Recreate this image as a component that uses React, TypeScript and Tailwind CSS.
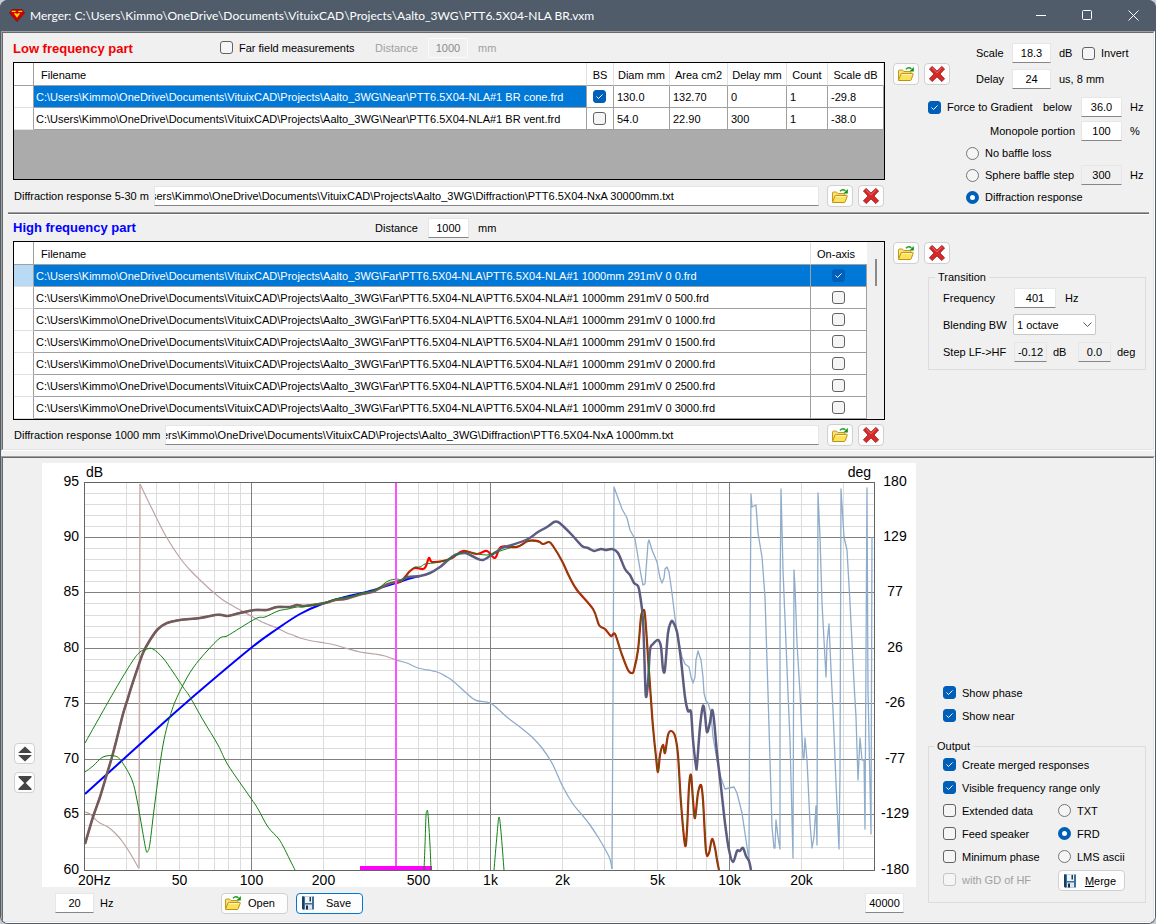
import type { ReactNode } from "react";
import clsx from "clsx";

type Point = [number, number];

const BASE = "C:\\Users\\Kimmo\\OneDrive\\Documents\\VituixCAD\\Projects\\Aalto_3WG\\";

const lowFiles = [
  { name: BASE + "Near\\PTT6.5X04-NLA#1 BR cone.frd", bs: true, diam: "130.0", area: "132.70", delay: "0", count: "1", scale: "-29.8" },
  { name: BASE + "Near\\PTT6.5X04-NLA#1 BR vent.frd", bs: false, diam: "54.0", area: "22.90", delay: "300", count: "1", scale: "-38.0" },
];

const highFiles = ["0", "500", "1000", "1500", "2000", "2500", "3000"].map(
  (angle) => BASE + "Far\\PTT6.5X04-NLA\\PTT6.5X04-NLA#1 1000mm 291mV 0 " + angle + ".frd"
);

/* ---------- Icons ---------- */

function AppLogo() {
  return (
    <svg width="16" height="13" viewBox="0 0 16 13" aria-hidden="true">
      <path d="M3 0.5h10L15.5 4 8 12.5 0.5 4z" fill="#d40000" stroke="#7c0000" strokeWidth="0.6" />
      <path d="M3 1.800h3.200L7 3H2.500zM9.800 1.800H13l.5 1.200H9z" fill="#ffe000" />
      <path d="M4.800 4.200h2.400L8 5.600l.8-1.400h2.400L8 8.800z" fill="#ffe000" />
    </svg>
  );
}

function FolderIcon() {
  return (
    <svg width="18" height="16" viewBox="0 0 18 16" aria-hidden="true">
      <path d="M1.5 13.5V5q0-1 1-1h3l1.3 1.5h6q1 0 1 1v2" fill="#f7e27a" stroke="#c59a1a" />
      <path d="M1.5 14.2 4 8q.3-.6 1-.6h10.6q.9 0 .6.8l-2 5.6q-.3.7-1 .7H2q-.7 0-.5-.3z" fill="#fbe25c" stroke="#c08f10" />
      <path d="M4.8 8.6h10" stroke="#fff7c0" />
      <path d="M9 3.200q2.600-2.800 5.400-.4" fill="none" stroke="#1da01d" strokeWidth="1.500" />
      <path d="M16.800 1v4.400h-4.400z" fill="#109010" />
    </svg>
  );
}

function DeleteIcon() {
  return (
    <svg width="18" height="18" viewBox="0 0 18 18" aria-hidden="true">
      <path
        d="M4.2 1.4 9 6.1l4.8-4.7 2.8 2.6L12 9l4.6 4.8-2.8 2.8L9 11.9l-4.8 4.7-2.8-2.8L6 9 1.4 4z"
        fill="#d42a2a"
        stroke="#a81616"
        strokeWidth="0.8"
      />
      <path d="M4.2 3 9 7.7 13.8 3" fill="none" stroke="#e87070" strokeWidth="1" />
    </svg>
  );
}

function DiskIcon() {
  return (
    <svg width="14" height="14" viewBox="0 0 14 14" aria-hidden="true">
      <path d="M1 .5h12v13H2L1 12.500z" fill="#3f7096" />
      <path d="M1 .5h2v13H2L1 12.500z" fill="#173f63" />
      <path d="M4 .5h7v6.500H4z" fill="#eef4f9" />
      <path d="M8.500 1h1.500v4.500H8.500z" fill="#22384e" />
      <path d="M4 8.500h7v5H4z" fill="#dbe6ef" />
      <path d="M5 9.500h2v4H5z" fill="#1d3047" />
    </svg>
  );
}

function ExpandIcon() {
  return (
    <svg width="14" height="16" viewBox="0 0 14 16" aria-hidden="true">
      <path d="M7 0.500 13.500 6.500v.5H.5v-.5zM7 15.500 13.500 9.500V9H.5v.5z" fill="#444" />
    </svg>
  );
}

function CollapseIcon() {
  return (
    <svg width="14" height="16" viewBox="0 0 14 16" aria-hidden="true">
      <path d="M.5 1h13v1.300L7.800 8l5.700 5.700V15H.5v-1.300L6.200 8 .5 2.300z" fill="#444" />
    </svg>
  );
}

/* ---------- Controls ---------- */

function CheckBox({ checked, label, disabled }: { checked?: boolean; label?: string; disabled?: boolean }) {
  return (
    <span className="grid size-[13px] shrink-0 place-items-center">
      <input
        type="checkbox"
        defaultChecked={checked}
        disabled={disabled}
        aria-label={label}
        className={clsx(
          "peer col-start-1 row-start-1 size-[13px] appearance-none rounded-[3px] border bg-[#f5f5f5] checked:border-[#005fb8] checked:bg-[#005fb8]",
          disabled ? "border-[#c4c4c4]" : "border-[#626262]"
        )}
      />
      <svg
        width="9"
        height="9"
        viewBox="0 0 9 9"
        className="pointer-events-none invisible col-start-1 row-start-1 peer-checked:visible"
        aria-hidden="true"
      >
        <path d="M1.500 4.500 3.500 6.500 7.500 2.500" fill="none" stroke="#fff" />
      </svg>
    </span>
  );
}

function Check({ children, checked, disabled, className }: { children: ReactNode; checked?: boolean; disabled?: boolean; className?: string }) {
  return (
    <label className={clsx("flex items-center gap-[6px] whitespace-nowrap", disabled && "text-[#a0a0a0]", className)}>
      <CheckBox checked={checked} disabled={disabled} />
      {children}
    </label>
  );
}

function Radio({ children, name, checked, className }: { children: ReactNode; name: string; checked?: boolean; className?: string }) {
  return (
    <label className={clsx("flex items-center gap-[6px] whitespace-nowrap", className)}>
      <input
        type="radio"
        name={name}
        defaultChecked={checked}
        className="size-[13px] shrink-0 appearance-none rounded-full border border-[#757575] bg-[#f5f5f5] checked:border-4 checked:border-[#005fb8] checked:bg-white"
      />
      {children}
    </label>
  );
}

function NumberBox({ id, value, label, readOnly, disabled, className }: { id?: string; value: string; label?: string; readOnly?: boolean; disabled?: boolean; className: string }) {
  return (
    <input
      id={id}
      type="text"
      defaultValue={value}
      aria-label={label}
      readOnly={readOnly}
      disabled={disabled}
      className={clsx(
        "h-[20px] shrink-0 border text-center",
        disabled ? "border-[#fafafa] bg-[#f0f0f0] text-[#8a8a8a]" : "border-[#e6e6e6] border-b-[#868686]",
        readOnly ? "bg-[#f0f0f0]" : !disabled && "bg-white",
        className
      )}
    />
  );
}

function IconButton({ label, children }: { label: string; children: ReactNode }) {
  return (
    <button type="button" aria-label={label} className="flex h-[22px] w-[26px] items-center justify-center rounded-[4px] border border-[#d0d0d0] bg-[#fdfdfd]">
      {children}
    </button>
  );
}

function FileButtons() {
  return (
    <div className="flex shrink-0 gap-[5px]">
      <IconButton label="Open file">
        <FolderIcon />
      </IconButton>
      <IconButton label="Remove file">
        <DeleteIcon />
      </IconButton>
    </div>
  );
}

function DiffractionRow({ id, label, value, wide }: { id: string; label: string; value: string; wide?: boolean }) {
  return (
    <div className="flex items-center pr-px">
      <label htmlFor={id} className={clsx("shrink-0 pl-px whitespace-nowrap", wide ? "w-[152px]" : "w-[141px]")}>
        {label}
      </label>
      <input
        id={id}
        type="text"
        defaultValue={value}
        className="mr-[8px] h-[20px] min-w-0 flex-1 border border-[#e6e6e6] border-b-[#868686] bg-white -indent-[4px]"
      />
      <FileButtons />
    </div>
  );
}

/* ---------- Tables ---------- */

function LowTable() {
  return (
    <div className="h-[118px] border border-black bg-[#ababab]">
      <table className="w-full table-fixed border-separate border-spacing-0 bg-white">
        <colgroup>
          <col className="w-[20px]" />
          <col />
          <col className="w-[27px]" />
          <col className="w-[56px]" />
          <col className="w-[58px]" />
          <col className="w-[59px]" />
          <col className="w-[41px]" />
          <col className="w-[56px]" />
        </colgroup>
        <thead>
          <tr className="h-[23px]">
            <th className="border-r border-b border-[#a0a0a0] p-0" />
            {["Filename", "BS", "Diam mm", "Area cm2", "Delay mm", "Count", "Scale dB"].map((title) => (
              <th
                key={title}
                className={clsx(
                  "overflow-hidden border-r border-b border-r-[#e0e0e0] border-b-[#a0a0a0] p-0 pt-[2px] font-normal whitespace-nowrap",
                  title === "Filename" ? "pl-[7px] text-left" : "text-center"
                )}
              >
                {title}
              </th>
            ))}
          </tr>
        </thead>
        <tbody>
          {lowFiles.map((file, i) => (
            <tr key={file.name} className="h-[22px]">
              <td className="border-r border-b border-r-[#a0a0a0] border-b-[#e0e0e0] p-0" />
              <td className={clsx("overflow-hidden border-r border-b border-[#a0a0a0] p-0 pl-[2px] whitespace-nowrap", i === 0 && "bg-[#0078d7] text-white")}>
                {file.name}
              </td>
              <td className="border-r border-b border-[#a0a0a0] p-0 pr-px">
                <div className="flex justify-center">
                  <CheckBox checked={file.bs} label="Baffle step" />
                </div>
              </td>
              {[file.diam, file.area, file.delay, file.count, file.scale].map((value, col) => (
                <td key={col} className="border-r border-b border-[#a0a0a0] p-0 pl-[3px]">
                  {value}
                </td>
              ))}
            </tr>
          ))}
        </tbody>
      </table>
    </div>
  );
}

function HighTable() {
  return (
    <div className="flex h-[179px] border border-black bg-[#f0f0f0]">
      <div className="min-w-0 flex-1 overflow-hidden">
        <table className="w-full table-fixed border-separate border-spacing-0 bg-white">
          <colgroup>
            <col className="w-[20px]" />
            <col />
            <col className="w-[56px]" />
          </colgroup>
          <thead>
            <tr className="h-[23px]">
              <th className="border-r border-b border-[#a0a0a0] p-0" />
              <th className="border-r border-b border-r-[#e0e0e0] border-b-[#a0a0a0] p-0 pt-[2px] pl-[7px] text-left font-normal">Filename</th>
              <th className="border-b border-[#a0a0a0] p-0 pt-[2px] pr-[6px] text-center font-normal">On-axis</th>
            </tr>
          </thead>
          <tbody>
            {highFiles.map((file, i) => (
              <tr key={file} className={clsx("h-[22px]", i === 0 && "bg-[#0078d7] text-white")}>
                <td className={clsx("border-r border-b border-r-[#a0a0a0] border-b-[#e0e0e0] p-0", i === 0 && "bg-[#b9daf4]")} />
                <td className="overflow-hidden border-r border-b border-[#a0a0a0] p-0 pl-[2px] whitespace-nowrap">{file}</td>
                <td className="border-r border-b border-[#a0a0a0] p-0">
                  <div className="flex justify-center">
                    <CheckBox checked={i === 0} label="On-axis" />
                  </div>
                </td>
              </tr>
            ))}
          </tbody>
        </table>
      </div>
      <div className="flex w-[17px] justify-center pt-[17px]">
        <div className="h-[27px] w-[2px] bg-[#8a8a8a]" />
      </div>
    </div>
  );
}

/* ---------- Chart ---------- */

const LEFT = 84;
const RIGHT = 874;
const TOP = 482;
const BOTTOM = 870;

const xOf = (hz: number) => Math.round(LEFT + 239 * Math.log10(hz / 20)) + 0.5;
const yOf = (db: number) => Math.floor(TOP + ((95 - db) * (BOTTOM - TOP)) / 35) + 0.5;

function line(points: Point[]) {
  return "M" + points.map((p) => p.join(",")).join("L");
}

// Catmull-Rom spline through all points
function smooth(points: Point[]) {
  let d = "M" + points[0].join(",");
  for (let i = 0; i < points.length - 1; i++) {
    const p0 = points[i - 1] ?? points[i];
    const p1 = points[i];
    const p2 = points[i + 1];
    const p3 = points[i + 2] ?? p2;
    d += `C${p1[0] + (p2[0] - p0[0]) / 6},${p1[1] + (p2[1] - p0[1]) / 6} ${p2[0] - (p3[0] - p1[0]) / 6},${p2[1] - (p3[1] - p1[1]) / 6} ${p2[0]},${p2[1]}`;
  }
  return d;
}

const phaseLowWrap: Point[] = [
  [85, 812], [90, 814], [95, 819], [100, 823], [108, 827], [115, 833], [122, 841], [130, 853], [138, 867], [139, 868],
];

const phaseLow: Point[] = [
  [140, 484], [157, 519], [167, 538], [180, 558], [190, 570], [200, 580], [213, 592], [223, 600], [233, 606], [251, 616],
  [262, 622], [277, 628], [287, 633], [293, 635], [300, 638], [312, 641], [325, 643], [335, 645], [345, 648], [360, 652],
  [375, 654], [385, 656], [396, 660],
];

const phaseHigh: Point[] = [
  [396, 660], [407, 663], [418, 668], [437, 672], [447, 677], [453, 681], [463, 690], [472, 698], [478, 701], [490, 703],
  [498, 709], [508, 718], [520, 727], [532, 737], [542, 748], [552, 763], [563, 787], [573, 804], [583, 816], [590, 825],
  [598, 837], [605, 849], [610, 859], [612, 869],
];

const phaseWraps: Point[] = [
  [612, 869], [613, 700], [614, 487], [622, 509], [627, 518], [630, 530], [635, 539], [638, 557], [641, 575], [643, 585],
  [645, 584], [647, 557], [648, 543], [649, 540], [652, 550], [657, 562], [660, 578], [662, 583], [664, 578], [665, 569],
  [667, 567], [669, 572], [672, 593], [675, 618], [678, 640], [682, 657], [685, 664], [689, 667], [691, 677], [693, 683],
  [695, 677], [696, 660], [698, 651], [701, 660], [703, 677], [704, 693], [706, 701], [708, 703], [711, 713], [713, 737],
  [717, 760], [721, 778], [725, 789], [729, 788], [734, 787], [737, 793], [742, 813], [747, 847], [749, 860], [750, 633],
  [751, 494], [752, 507], [756, 505], [758, 533], [762, 557], [765, 597], [768, 693], [772, 827], [774, 848], [775, 848],
  [776, 820], [778, 837], [780, 849], [780, 600], [781, 489], [783, 570], [788, 693], [790, 740], [793, 858], [794, 570],
  [795, 587], [797, 643], [800, 693], [803, 758], [804, 758], [805, 738], [807, 760], [810, 823], [812, 848], [814, 837],
  [816, 806], [817, 845], [818, 493], [820, 537], [822, 603], [826, 677], [827, 643], [829, 624], [831, 670], [833, 710],
  [836, 783], [839, 849], [840, 773], [841, 489], [844, 537], [847, 550], [850, 603], [854, 683], [856, 717], [858, 780],
  [860, 738], [862, 760], [864, 760], [865, 829], [867, 488], [868, 690], [871, 834], [872, 537],
];

const mergedLow: Point[] = [
  [85, 844], [93, 817], [100, 797], [106, 777], [112, 757], [117, 738], [123, 714], [128, 698], [131, 688], [137, 670],
  [143, 653], [150, 640], [158, 629], [167, 623], [180, 620], [200, 618], [215, 615], [222, 615], [228, 616], [240, 613],
  [255, 610], [267, 610], [277, 607], [290, 607], [297, 605], [303, 606], [312, 605], [325, 603], [335, 600], [345, 599],
  [352, 597], [362, 594], [372, 592], [380, 588], [388, 584], [396, 582],
];

const mergedHigh: Point[] = [
  [396, 582], [402, 580], [408, 577], [420, 576], [430, 573], [440, 567], [447, 561], [455, 555], [465, 553], [472, 556],
  [478, 559], [483, 560], [490, 556], [502, 548], [512, 545], [528, 539], [538, 532], [547, 527], [554, 522], [558, 522],
  [563, 526], [572, 535], [582, 546], [588, 548], [594, 551], [601, 549], [606, 550], [612, 549], [618, 553], [625, 569],
  [630, 575], [634, 583], [638, 586], [640, 595], [643, 620], [645, 677], [646, 697], [648, 683], [650, 650], [653, 644],
  [658, 640], [661, 647], [663, 669], [665, 669], [668, 633], [671, 622], [673, 622], [677, 632], [681, 660], [685, 697],
  [688, 711], [691, 712], [693, 740], [696, 766], [697, 765], [700, 727], [703, 706], [705, 715], [707, 732], [710, 722],
  [712, 710], [714, 720], [717, 753], [721, 787], [725, 823], [729, 850], [733, 862], [737, 851], [740, 851], [743, 848],
  [746, 856], [749, 861], [751, 870],
];

const highTarget: Point[] = [
  [85, 794], [138, 746], [170, 717], [202, 689], [251, 648], [277, 629], [300, 614], [322, 604], [345, 597], [370, 591],
  [396, 583], [408, 579], [420, 576],
];

const nearRolloff: Point[] = [
  [549, 542], [553, 546], [562, 561], [569, 576], [577, 590], [593, 609], [599, 625], [605, 629], [611, 636], [615, 634],
  [621, 652], [628, 670], [632, 673], [634, 670], [638, 650], [641, 617], [643, 611], [645, 615], [648, 657], [651, 700],
  [653, 727], [656, 757], [658, 772], [660, 755], [663, 745], [665, 753], [668, 735], [671, 731], [675, 736], [678, 755],
  [681, 803], [685, 845], [687, 830], [689, 787], [691, 775], [693, 800], [695, 818], [698, 793], [701, 785], [703, 800],
  [706, 851], [709, 853], [712, 839], [715, 848], [717, 860], [719, 870],
];

const lowSum: Point[] = [
  [396, 582], [400, 582], [405, 577], [410, 571], [415, 568], [423, 569], [426, 566], [429, 558], [432, 562], [443, 561],
  [452, 558], [463, 551], [477, 554], [487, 551], [495, 558], [501, 547], [517, 547], [528, 541], [538, 541], [543, 544],
  ...nearRolloff,
];

const ventNear: Point[] = [
  [85, 743], [115, 690], [132, 662], [140, 652], [147, 649], [153, 649], [163, 658], [173, 672], [183, 687], [190, 697],
  [203, 720], [218, 745], [228, 765], [250, 797], [258, 809], [268, 827], [278, 838], [283, 846], [290, 860], [295, 870],
];

const coneNear: Point[] = [
  [85, 772], [93, 766], [103, 757], [115, 756], [122, 762], [132, 780], [137, 800], [142, 828], [146, 850], [148, 851],
  [150, 843], [155, 802], [163, 745], [172, 710], [182, 687], [193, 668], [207, 651], [220, 638], [227, 636], [240, 628],
  [257, 618], [265, 617], [278, 611], [288, 609], [297, 607], [303, 607], [325, 603], [335, 599], [352, 596], [362, 593],
  [372, 591], [380, 587], [388, 581], [397, 579], [403, 580], [413, 568], [420, 567], [425, 564], [433, 563], [447, 560],
  [460, 553], [468, 552], [487, 555], [503, 550], [513, 547], [522, 545], [528, 541], [538, 542], [543, 544], ...nearRolloff,
];

const peaks: Point[][] = [
  [[424, 870], [425, 845], [426, 816], [427, 811], [428, 814], [430, 845], [431, 870]],
  [[494, 870], [497, 835], [499, 817], [501, 832], [504, 870]],
];

const minorHz = [30, 40, 50, 60, 70, 80, 90, 200, 300, 400, 500, 600, 700, 800, 900, 2000, 3000, 4000, 5000, 6000, 7000, 8000, 9000, 20000, 30000];
const hzLabels: [number, string][] = [
  [50, "50"], [100, "100"], [200, "200"], [500, "500"], [1000, "1k"], [2000, "2k"], [5000, "5k"], [10000, "10k"], [20000, "20k"],
];
const degLabels = ["180", "129", "77", "26", "-26", "-77", "-129", "-180"];
const minorDb = Array.from({ length: 34 }, (_, i) => 61 + i).filter((db) => db % 5 !== 0);
const majorDb = [95, 90, 85, 80, 75, 70, 65, 60];

function ResponseChart() {
  return (
    <svg
      viewBox="42 463 874 424"
      role="img"
      aria-label="Merged frequency response"
      className="block h-auto w-full bg-white text-[14px]"
    >
      <g stroke="#dcdcdc">
        {minorHz.map((hz) => (
          <line key={hz} x1={xOf(hz)} x2={xOf(hz)} y1={TOP} y2={BOTTOM} />
        ))}
        {minorDb.map((db) => (
          <line key={db} x1={LEFT} x2={RIGHT} y1={yOf(db)} y2={yOf(db)} />
        ))}
      </g>
      <g stroke="#808080">
        {[100, 1000, 10000].map((hz) => (
          <line key={hz} x1={xOf(hz)} x2={xOf(hz)} y1={TOP} y2={BOTTOM} />
        ))}
        {majorDb.map((db) => (
          <line key={db} x1={LEFT} x2={RIGHT} y1={yOf(db)} y2={yOf(db)} />
        ))}
      </g>

      <g fill="none" strokeLinejoin="round">
        <path d={smooth(phaseLowWrap)} stroke="#bda4a4" strokeWidth="1.2" />
        <path d={line([[139, 868], [140, 484]])} stroke="#c9adad" strokeWidth="1.5" />
        <path d={smooth(phaseLow)} stroke="#bda4a4" strokeWidth="1.2" />
        <path d={smooth(phaseHigh)} stroke="#8faccb" strokeWidth="1.3" />
        <path d={line(phaseWraps)} stroke="#8faccb" strokeWidth="1.3" />

        <path d={smooth(highTarget)} stroke="#0000ff" strokeWidth="2" />
        <path d={smooth(lowSum)} stroke="#ff0000" strokeWidth="2.2" />
        <path d={smooth(mergedLow)} stroke="#a05050" strokeWidth="2.6" />
        <path d={smooth(mergedLow)} stroke="#666060" strokeWidth="1.8" />
        <path d={smooth(mergedHigh)} stroke="#5c5c80" strokeWidth="2.5" />
        <g stroke="#118011">
          <path d={smooth(ventNear)} />
          <path d={smooth(coneNear)} />
        </g>
      </g>

      <rect x="360" y="866" width="72" height="4" fill="#ff00ff" />
      <path d="M396 483V866" stroke="#ff50ff" strokeWidth="2" />
      <g fill="none" stroke="#118011">
        {peaks.map((peak, i) => (
          <path key={i} d={smooth(peak)} />
        ))}
      </g>
      <rect x={LEFT + 0.5} y={TOP + 0.5} width={RIGHT - LEFT} height={BOTTOM - TOP} fill="none" stroke="#646464" />

      <g fill="#000">
        <text x="86" y="477">dB</text>
        <text x="871" y="477" textAnchor="end">deg</text>
        {majorDb.map((db, i) => (
          <g key={db}>
            <text x="79" y={yOf(db) + 3.5} textAnchor="end">{db}</text>
            <text x="895" y={yOf(db) + 3.5} textAnchor="middle">{degLabels[i]}</text>
          </g>
        ))}
        <text x="78" y="885">20Hz</text>
        {hzLabels.map(([hz, text]) => (
          <text key={hz} x={xOf(hz)} y="885" textAnchor="middle">{text}</text>
        ))}
      </g>
    </svg>
  );
}

/* ---------- Window parts ---------- */

function TitleBar() {
  return (
    <header className="flex h-[31px] items-center bg-[#505c6a] pl-[9px] text-white">
      <AppLogo />
      <h1 className="min-w-0 flex-1 overflow-hidden pl-[5px] font-[Lato,sans-serif] text-[12px] leading-[20px] whitespace-nowrap">
        {"Merger: " + BASE + "PTT6.5X04-NLA BR.vxm"}
      </h1>
      <button type="button" aria-label="Minimize" className="flex h-full w-[46px] items-center justify-center">
        <svg width="11" height="11" aria-hidden="true"><path d="M0 5.500h10" stroke="#fff" /></svg>
      </button>
      <button type="button" aria-label="Maximize" className="flex h-full w-[46px] items-center justify-center">
        <svg width="11" height="11" aria-hidden="true"><rect x="0.500" y="0.500" width="9" height="9" rx="1" fill="none" stroke="#fff" /></svg>
      </button>
      <button type="button" aria-label="Close" className="flex h-full w-[46px] items-center justify-center">
        <svg width="11" height="11" aria-hidden="true"><path d="M.5.5l10 10M10.500.5l-10 10" stroke="#fff" /></svg>
      </button>
    </header>
  );
}

function Panel({ children }: { children: ReactNode }) {
  return (
    <div className="border border-t-[#a0a0a0] border-r-white border-b-white border-l-[#a0a0a0]">
      <div className="border border-t-[#696969] border-r-[#e3e3e3] border-b-[#e3e3e3] border-l-[#696969]">{children}</div>
    </div>
  );
}

function LowSection() {
  return (
    <section className="flex gap-[8px] pl-[10px]">
      <div className="min-w-0 flex-1">
        <div className="flex h-[29px] items-center">
          <h2 className="w-[207px] pt-[2px] text-[13px] font-bold text-[#f00000]">Low frequency part</h2>
          <Check className="w-[155px]">Far field measurements</Check>
          <label htmlFor="low-distance" className="w-[53px] text-[#a0a0a0]">Distance</label>
          <NumberBox id="low-distance" value="1000" disabled className="w-[40px]" />
          <span className="pl-[10px] text-[#a0a0a0]">mm</span>
        </div>
        <LowTable />
        <div className="flex h-[32px] flex-col justify-center">
          <DiffractionRow
            id="low-diffraction"
            label="Diffraction response 5-30 m"
            value={BASE.slice(4) + "Diffraction\\PTT6.5X04-NxA 30000mm.txt"}
          />
        </div>
      </div>

      <div className="w-[260px] shrink-0 pt-[7px]">
        <div className="flex gap-[26px]">
          <div className="pt-[23px]">
            <FileButtons />
          </div>
          <div>
            <div className="flex h-[26px] items-center">
              <label htmlFor="scale" className="w-[36px]">Scale</label>
              <NumberBox id="scale" value="18.3" className="w-[39px]" />
              <span className="w-[31px] pl-[8px]">dB</span>
              <Check>Invert</Check>
            </div>
            <div className="flex h-[26px] items-center">
              <label htmlFor="delay" className="w-[36px]">Delay</label>
              <NumberBox id="delay" value="24" className="w-[39px]" />
              <span className="pl-[8px]">us, 8 mm</span>
            </div>
          </div>
        </div>
        <div className="mt-[2px] flex h-[26px] items-center pl-[35px]">
          <Check checked className="w-[115px]">Force to Gradient</Check>
          <label htmlFor="below" className="w-[38px]">below</label>
          <NumberBox id="below" value="36.0" className="w-[41px]" />
          <span className="pl-[8px]">Hz</span>
        </div>
        <div className="flex h-[22px] items-center pl-[97px]">
          <label htmlFor="monopole" className="w-[91px] whitespace-nowrap">Monopole portion</label>
          <NumberBox id="monopole" value="100" className="w-[41px]" />
          <span className="pl-[8px]">%</span>
        </div>
        <div className="pl-[73px]">
          <Radio name="baffle" className="h-[22px]">No baffle loss</Radio>
          <div className="flex h-[22px] items-center">
            <Radio name="baffle" className="w-[115px]">Sphere baffle step</Radio>
            <NumberBox value="300" label="Baffle step frequency" readOnly className="w-[41px]" />
            <span className="pl-[8px]">Hz</span>
          </div>
          <Radio name="baffle" checked className="h-[22px]">Diffraction response</Radio>
        </div>
      </div>
    </section>
  );
}

function HighSection() {
  return (
    <section className="flex gap-[8px] pl-[10px]">
      <div className="min-w-0 flex-1">
        <div className="flex h-[26px] items-center">
          <h2 className="w-[362px] text-[13px] font-bold text-[#0000ff]">High frequency part</h2>
          <label htmlFor="high-distance" className="w-[53px]">Distance</label>
          <NumberBox id="high-distance" value="1000" className="w-[41px]" />
          <span className="pl-[9px]">mm</span>
        </div>
        <HighTable />
        <div className="flex h-[29px] flex-col justify-center">
          <DiffractionRow
            id="high-diffraction"
            label="Diffraction response 1000 mm"
            value={BASE.slice(5) + "Diffraction\\PTT6.5X04-NxA 1000mm.txt"}
            wide
          />
        </div>
      </div>

      <div className="w-[260px] shrink-0 pt-[27px]">
        <FileButtons />
        <fieldset className="mt-[6px] mr-[7px] ml-[35px] border border-[#dcdcdc] pb-[4px] pl-[14px]">
          <legend className="-ml-[8px] px-[3px] leading-[14px]">Transition</legend>
          <div className="flex h-[27px] items-center">
            <label htmlFor="frequency" className="w-[71px]">Frequency</label>
            <NumberBox id="frequency" value="401" className="w-[42px]" />
            <span className="pl-[9px]">Hz</span>
          </div>
          <div className="flex h-[27px] items-center">
            <label htmlFor="blending" className="w-[70px] whitespace-nowrap">Blending BW</label>
            <div className="grid items-center">
              <select id="blending" className="col-start-1 row-start-1 h-[21px] w-[83px] appearance-none rounded-[2px] border border-[#c8c8c8] bg-white pl-[3px]">
                <option>1 octave</option>
              </select>
              <svg width="9" height="6" className="pointer-events-none col-start-1 row-start-1 mr-[4px] justify-self-end" aria-hidden="true">
                <path d="M.5.5l4 4 4-4" fill="none" stroke="#555" />
              </svg>
            </div>
          </div>
          <div className="flex h-[27px] items-center">
            <label htmlFor="step-db" className="w-[71px] whitespace-nowrap">{"Step LF->HF"}</label>
            <NumberBox id="step-db" value="-0.12" readOnly className="w-[33px]" />
            <span className="w-[31px] pl-[6px]">dB</span>
            <NumberBox value="0.0" label="Phase step" readOnly className="w-[33px]" />
            <span className="pl-[6px]">deg</span>
          </div>
        </fieldset>
      </div>
    </section>
  );
}

function ChartSection() {
  return (
    <section className="flex">
      <div className="min-w-0 flex-1 pt-[5px] pb-[2px]">
        <div className="flex">
          <div className="flex w-[39px] shrink-0 flex-col items-start justify-end gap-[8px] pb-[94px] pl-[11px]">
            <button type="button" aria-label="Expand range" className="flex size-[21px] items-center justify-center rounded-[4px] border border-[#d0d0d0] bg-[#fdfdfd]">
              <ExpandIcon />
            </button>
            <button type="button" aria-label="Collapse range" className="flex size-[21px] items-center justify-center rounded-[4px] border border-[#d0d0d0] bg-[#fdfdfd]">
              <CollapseIcon />
            </button>
          </div>
          <div className="min-w-0 flex-1">
            <ResponseChart />
          </div>
        </div>
        <div className="flex h-[32px] items-center pr-[12px] pl-[52px]">
          <NumberBox id="range-min" value="20" className="w-[39px]" />
          <label htmlFor="range-min" className="w-[127px] pl-[6px]">Hz</label>
          <button type="button" className="mr-[8px] flex h-[21px] w-[67px] items-center rounded-[4px] border border-[#d0d0d0] bg-[#fdfdfd] pl-[2px]">
            <FolderIcon />
            <span className="flex-1 pr-[6px] text-center">Open</span>
          </button>
          <button type="button" className="flex h-[21px] w-[67px] items-center rounded-[4px] border border-[#0078d4] bg-[#fdfdfd] pl-[4px]">
            <DiskIcon />
            <span className="flex-1 text-center">Save</span>
          </button>
          <NumberBox value="40000" label="Maximum frequency" className="ml-auto w-[39px]" />
        </div>
      </div>

      <div className="flex w-[237px] shrink-0 flex-col justify-end pb-[18px]">
        <div className="pb-[12px] pl-[27px]">
          <Check checked className="h-[23px]">Show phase</Check>
          <Check checked className="h-[23px]">Show near</Check>
        </div>
        <fieldset className="mr-[7px] ml-[12px] border border-[#dcdcdc] pb-[11px] pl-[14px]">
          <legend className="-ml-[9px] px-[3px] leading-[14px]">Output</legend>
          <div className="grid auto-rows-[23px] grid-cols-[115px_1fr]">
            <Check checked className="col-span-2">Create merged responses</Check>
            <Check checked className="col-span-2">Visible frequency range only</Check>
            <Check>Extended data</Check>
            <Radio name="format">TXT</Radio>
            <Check>Feed speaker</Check>
            <Radio name="format" checked>FRD</Radio>
            <Check>Minimum phase</Check>
            <Radio name="format">LMS ascii</Radio>
            <Check disabled>with GD of HF</Check>
            <button type="button" className="flex h-[21px] w-[67px] items-center self-end rounded-[4px] border border-[#d0d0d0] bg-[#fdfdfd] pl-[4px]">
              <DiskIcon />
              <span className="flex-1 text-center"><u>M</u>erge</span>
            </button>
          </div>
        </fieldset>
      </div>
    </section>
  );
}

export default function App() {
  return (
    <div className="bg-[#c8ccd0] font-['Liberation_Sans',Arial,sans-serif] text-[11px] leading-[14px] text-black">
      <div className="min-w-[1000px] overflow-hidden rounded-[8px] bg-[#505c6a]">
        <TitleBar />
        <main className="mx-px mb-px flex flex-col gap-[5px] overflow-hidden rounded-b-[7px] bg-[#f0f0f0]">
          <Panel>
            <LowSection />
            <hr className="mr-[4px] ml-[5px] h-[3px] border-t border-b border-t-[#a0a0a0] border-b-white bg-[#696969]" />
            <HighSection />
          </Panel>
          <Panel>
            <ChartSection />
          </Panel>
        </main>
      </div>
    </div>
  );
}
